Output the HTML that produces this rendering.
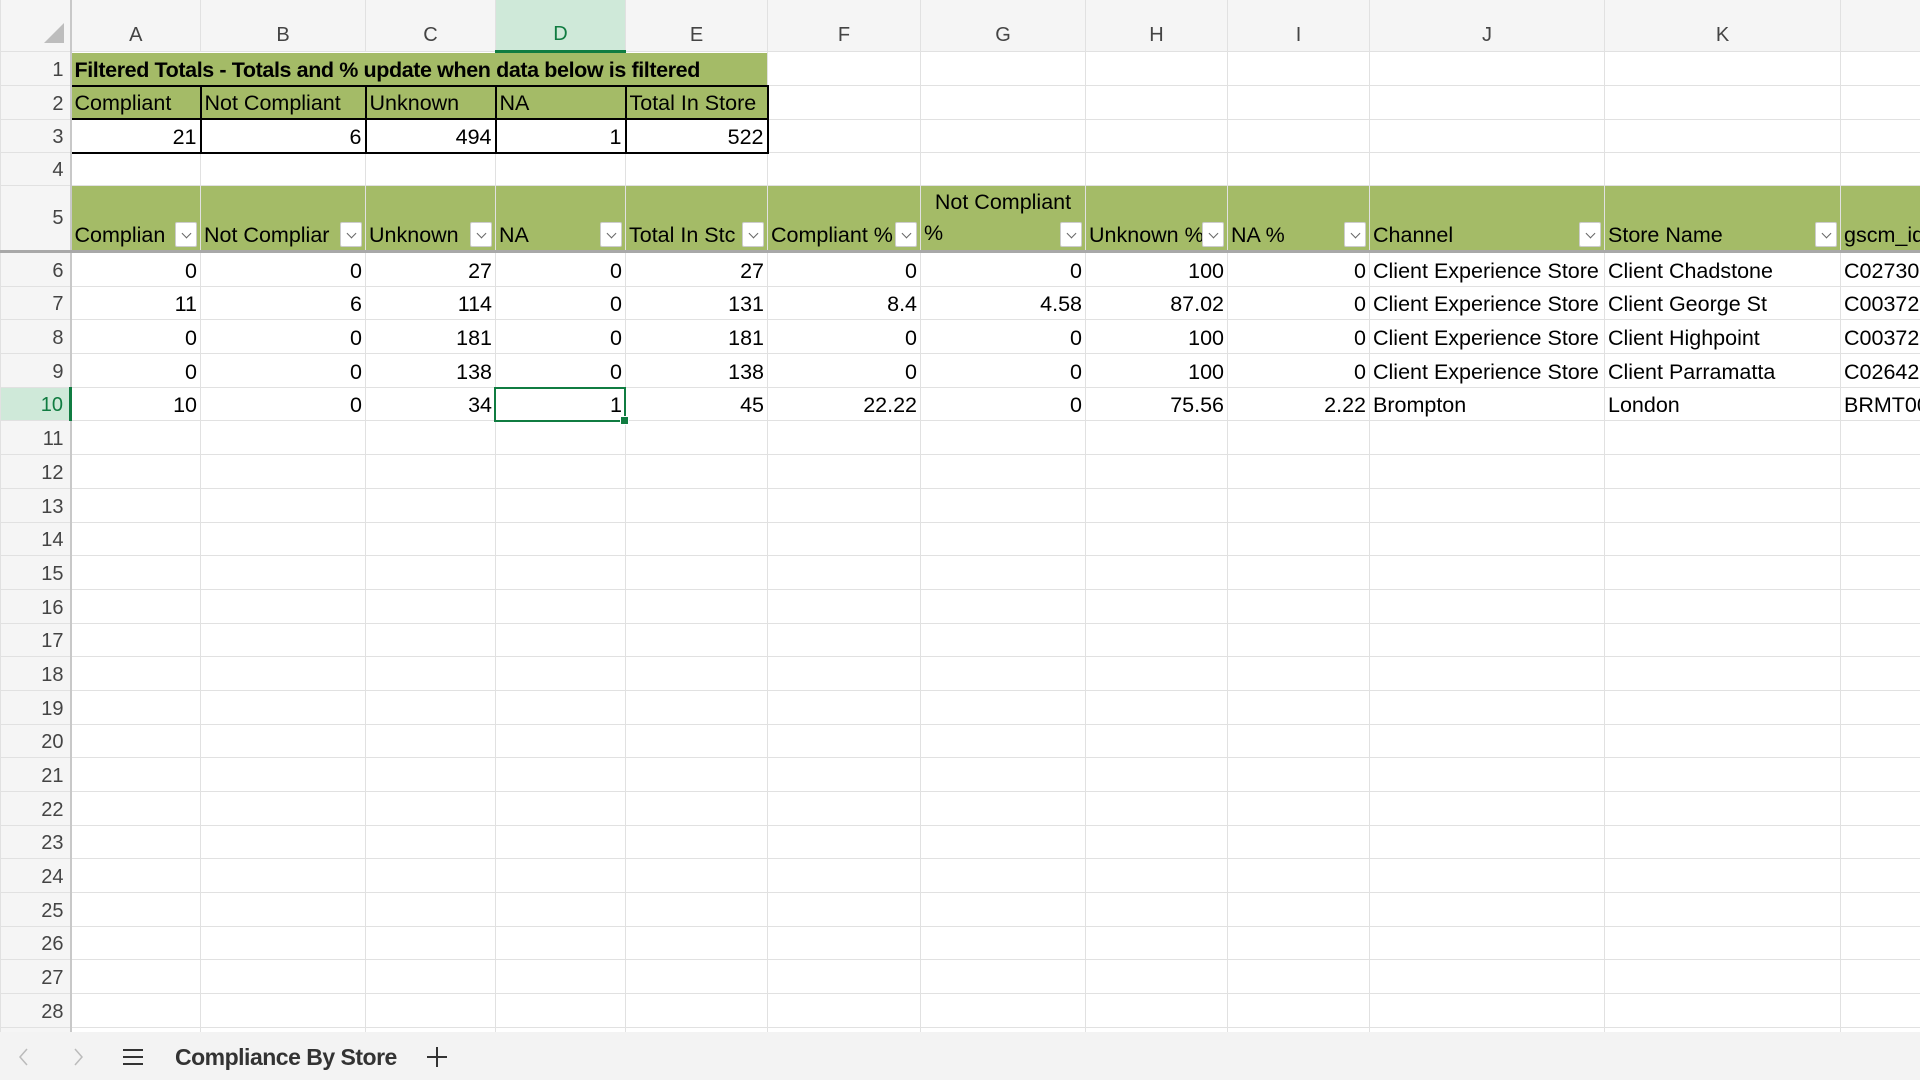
<!DOCTYPE html>
<html><head><meta charset="utf-8"><style>
html,body{margin:0;padding:0;width:1920px;height:1080px;overflow:hidden;background:#fff;font-family:"Liberation Sans",sans-serif}
table{border-collapse:collapse;table-layout:fixed;position:absolute;left:0;top:0;width:2000px}
td{border:1px solid #e1e1e1;padding:0 3px;font-size:21.5px;color:#000;white-space:nowrap;overflow:hidden;vertical-align:bottom;height:32.7px;line-height:30px;position:relative;box-sizing:content-box}
td.r{text-align:right}
tr.h td{background:#f5f5f5;color:#444;text-align:center;font-size:20px;vertical-align:bottom;line-height:32px;height:50px;border-color:#e1e1e1;border-top:none}
td.n{background:#f5f5f5;color:#444;text-align:right;padding-right:6px;font-size:20px;border-right:2px solid #c8c8c8}
td.g{background:#a4bb67}
td.b{border:2px solid #000}
tr.t td{height:31.5px}
tr.f td{height:64px}
tr.f td.g{border-bottom:3px solid #a8a8a8}
tr.f td.n{border-bottom:3px solid #a8a8a8}
.fb{position:absolute;right:3px;bottom:3px;width:22px;height:25px;background:#fff;border:1px solid #ccc;border-radius:2px;box-sizing:border-box}
.fb:after{content:"";position:absolute;left:7px;top:7px;width:6px;height:6px;border-right:1px solid #666;border-bottom:1px solid #666;transform:rotate(45deg)}
.sel{position:absolute;left:494px;top:387px;width:132px;height:35px;border:2px solid #107c41;box-sizing:border-box}
.sel:after{content:"";position:absolute;right:-5px;bottom:-5px;width:7px;height:7px;background:#107c41;border:1px solid #fff}
.bar{position:absolute;left:0;top:1032px;width:1920px;height:48px;background:#f3f3f3}
</style></head><body>
<table>
<colgroup><col style="width:70px"><col style="width:130px"><col style="width:165px"><col style="width:130px"><col style="width:130px"><col style="width:142px"><col style="width:153px"><col style="width:165px"><col style="width:142px"><col style="width:142px"><col style="width:235px"><col style="width:236px"><col style="width:160px"></colgroup>
<tr class="h"><td style="background:#f5f5f5;border-right:2px solid #c8c8c8;position:relative"><div style="position:absolute;right:6px;bottom:8px;width:0;height:0;border-left:20px solid transparent;border-bottom:20px solid #bdbdbd"></div></td><td>A</td><td>B</td><td>C</td><td style="background:#cfe9d9;color:#107c41;border-bottom:3px solid #107c41">D</td><td>E</td><td>F</td><td>G</td><td>H</td><td>I</td><td>J</td><td>K</td><td></td></tr>
<tr class="t"><td class="n">1</td><td class="g" colspan="5" style="font-weight:bold;font-size:21.5px;letter-spacing:-0.4px;border-bottom:2px solid #000">Filtered Totals - Totals and % update when data below is filtered</td><td></td><td></td><td></td><td></td><td></td><td></td><td></td></tr>
<tr class="t"><td class="n">2</td><td class="g b">Compliant</td><td class="g b">Not Compliant</td><td class="g b">Unknown</td><td class="g b">NA</td><td class="g b">Total In Store</td><td></td><td></td><td></td><td></td><td></td><td></td><td></td></tr>
<tr class="t"><td class="n">3</td><td class="b r">21</td><td class="b r">6</td><td class="b r">494</td><td class="b r">1</td><td class="b r">522</td><td></td><td></td><td></td><td></td><td></td><td></td><td></td></tr>
<tr class="t"><td class="n">4</td><td></td><td></td><td></td><td></td><td></td><td></td><td></td><td></td><td></td><td></td><td></td><td></td></tr>
<tr class="f"><td class="n" style="vertical-align:middle">5</td>
<td class="g">Complian<span class="fb"></span></td>
<td class="g">Not Compliar<span class="fb"></span></td>
<td class="g">Unknown<span class="fb"></span></td>
<td class="g">NA<span class="fb"></span></td>
<td class="g">Total In Stc<span class="fb"></span></td>
<td class="g">Compliant %<span class="fb"></span></td>
<td class="g" style="overflow:visible;line-height:33px"><div style="position:absolute;left:0;right:0;top:0;text-align:center;line-height:32px">Not Compliant</div>%<span class="fb"></span></td>
<td class="g">Unknown %<span class="fb"></span></td>
<td class="g">NA %<span class="fb"></span></td>
<td class="g">Channel<span class="fb"></span></td>
<td class="g">Store Name<span class="fb"></span></td>
<td class="g">gscm_id</td></tr>
<tr><td class="n">6</td><td class="r">0</td><td class="r">0</td><td class="r">27</td><td class="r">0</td><td class="r">27</td><td class="r">0</td><td class="r">0</td><td class="r">100</td><td class="r">0</td><td>Client Experience Store</td><td>Client Chadstone</td><td>C02730</td></tr>
<tr><td class="n">7</td><td class="r">11</td><td class="r">6</td><td class="r">114</td><td class="r">0</td><td class="r">131</td><td class="r">8.4</td><td class="r">4.58</td><td class="r">87.02</td><td class="r">0</td><td>Client Experience Store</td><td>Client George St</td><td>C00372</td></tr>
<tr><td class="n">8</td><td class="r">0</td><td class="r">0</td><td class="r">181</td><td class="r">0</td><td class="r">181</td><td class="r">0</td><td class="r">0</td><td class="r">100</td><td class="r">0</td><td>Client Experience Store</td><td>Client Highpoint</td><td>C00372</td></tr>
<tr><td class="n">9</td><td class="r">0</td><td class="r">0</td><td class="r">138</td><td class="r">0</td><td class="r">138</td><td class="r">0</td><td class="r">0</td><td class="r">100</td><td class="r">0</td><td>Client Experience Store</td><td>Client Parramatta</td><td>C02642</td></tr>
<tr><td class="n" style="background:#cfe9d9;color:#107c41;border-right:3px solid #107c41">10</td><td class="r">10</td><td class="r">0</td><td class="r">34</td><td class="r">1</td><td class="r">45</td><td class="r">22.22</td><td class="r">0</td><td class="r">75.56</td><td class="r">2.22</td><td>Brompton</td><td>London</td><td>BRMT00</td></tr>
<tr><td class="n">11</td><td></td><td></td><td></td><td></td><td></td><td></td><td></td><td></td><td></td><td></td><td></td><td></td></tr>
<tr><td class="n">12</td><td></td><td></td><td></td><td></td><td></td><td></td><td></td><td></td><td></td><td></td><td></td><td></td></tr>
<tr><td class="n">13</td><td></td><td></td><td></td><td></td><td></td><td></td><td></td><td></td><td></td><td></td><td></td><td></td></tr>
<tr><td class="n">14</td><td></td><td></td><td></td><td></td><td></td><td></td><td></td><td></td><td></td><td></td><td></td><td></td></tr>
<tr><td class="n">15</td><td></td><td></td><td></td><td></td><td></td><td></td><td></td><td></td><td></td><td></td><td></td><td></td></tr>
<tr><td class="n">16</td><td></td><td></td><td></td><td></td><td></td><td></td><td></td><td></td><td></td><td></td><td></td><td></td></tr>
<tr><td class="n">17</td><td></td><td></td><td></td><td></td><td></td><td></td><td></td><td></td><td></td><td></td><td></td><td></td></tr>
<tr><td class="n">18</td><td></td><td></td><td></td><td></td><td></td><td></td><td></td><td></td><td></td><td></td><td></td><td></td></tr>
<tr><td class="n">19</td><td></td><td></td><td></td><td></td><td></td><td></td><td></td><td></td><td></td><td></td><td></td><td></td></tr>
<tr><td class="n">20</td><td></td><td></td><td></td><td></td><td></td><td></td><td></td><td></td><td></td><td></td><td></td><td></td></tr>
<tr><td class="n">21</td><td></td><td></td><td></td><td></td><td></td><td></td><td></td><td></td><td></td><td></td><td></td><td></td></tr>
<tr><td class="n">22</td><td></td><td></td><td></td><td></td><td></td><td></td><td></td><td></td><td></td><td></td><td></td><td></td></tr>
<tr><td class="n">23</td><td></td><td></td><td></td><td></td><td></td><td></td><td></td><td></td><td></td><td></td><td></td><td></td></tr>
<tr><td class="n">24</td><td></td><td></td><td></td><td></td><td></td><td></td><td></td><td></td><td></td><td></td><td></td><td></td></tr>
<tr><td class="n">25</td><td></td><td></td><td></td><td></td><td></td><td></td><td></td><td></td><td></td><td></td><td></td><td></td></tr>
<tr><td class="n">26</td><td></td><td></td><td></td><td></td><td></td><td></td><td></td><td></td><td></td><td></td><td></td><td></td></tr>
<tr><td class="n">27</td><td></td><td></td><td></td><td></td><td></td><td></td><td></td><td></td><td></td><td></td><td></td><td></td></tr>
<tr><td class="n">28</td><td></td><td></td><td></td><td></td><td></td><td></td><td></td><td></td><td></td><td></td><td></td><td></td></tr>
<tr><td class="n">29</td><td></td><td></td><td></td><td></td><td></td><td></td><td></td><td></td><td></td><td></td><td></td><td></td></tr>
</table>
<div class="sel"></div>
<div class="bar">
<svg style="position:absolute;left:16px;top:14px" width="16" height="22"><path d="M11 3 L4 11 L11 19" stroke="#bbb" stroke-width="1.5" fill="none"/></svg>
<svg style="position:absolute;left:70px;top:14px" width="16" height="22"><path d="M5 3 L12 11 L5 19" stroke="#bbb" stroke-width="1.5" fill="none"/></svg>
<svg style="position:absolute;left:122px;top:15px" width="22" height="20"><path d="M1 3H21M1 10H21M1 17H21" stroke="#333" stroke-width="2" fill="none"/></svg>
<div style="position:absolute;left:175px;top:12px;font-size:23px;font-weight:bold;color:#333;letter-spacing:-0.5px">Compliance By Store</div>
<svg style="position:absolute;left:426px;top:14px" width="22" height="22"><path d="M11 1V21M1 11H21" stroke="#333" stroke-width="2" fill="none"/></svg>
</div>
</body></html>
